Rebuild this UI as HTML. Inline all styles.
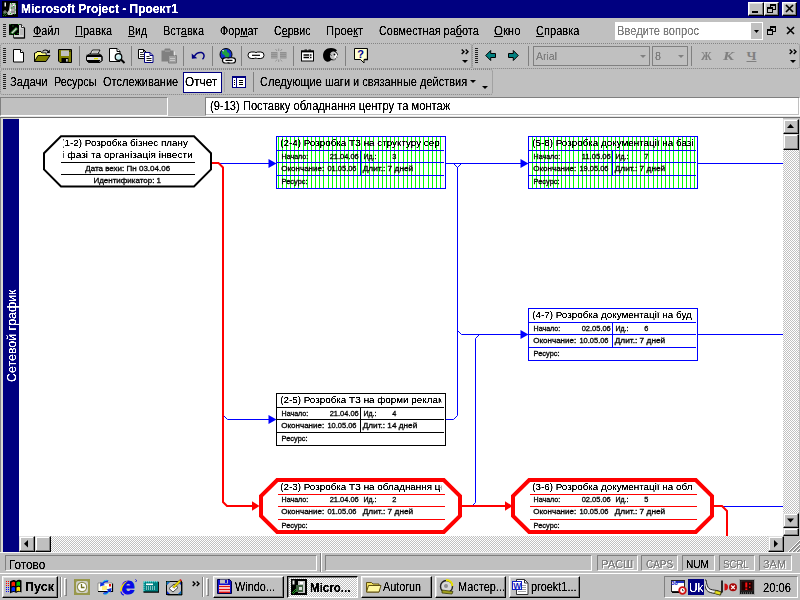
<!DOCTYPE html><html lang="ru"><head><meta charset="utf-8"><title>Microsoft Project - Проект1</title><style>
html,body{margin:0;padding:0;}
body{width:800px;height:600px;overflow:hidden;background:#c0c0c0;position:relative;font-family:"Liberation Sans",sans-serif;font-size:12px;color:#000;}
.a{position:absolute;}
.t{position:absolute;white-space:nowrap;line-height:1;transform-origin:0 0;filter:url(#crisp);}
u{text-decoration:underline;text-underline-offset:1px;}
.btn{position:absolute;background:#c0c0c0;box-sizing:border-box;border:1px solid;border-color:#fff #000 #000 #fff;box-shadow:inset -1px -1px 0 #808080,inset 1px 1px 0 #dfdfdf;}
.sbtn{position:absolute;background:#c0c0c0;box-sizing:border-box;border:1px solid;border-color:#dfdfdf #000 #000 #dfdfdf;box-shadow:inset -1px -1px 0 #808080,inset 1px 1px 0 #fff;}
.sunk{position:absolute;box-sizing:border-box;border:1px solid;border-color:#808080 #fff #fff #808080;}
.track{position:absolute;background:repeating-conic-gradient(#fff 0 25%,#c0c0c0 0 50%) 0 0/2px 2px;}
</style></head><body>
<svg width="0" height="0" style="position:absolute"><defs><filter id="crisp" x="-0.05" y="-0.3" width="1.1" height="1.6" color-interpolation-filters="sRGB"><feComponentTransfer><feFuncA type="linear" slope="2.6" intercept="-0.5"/></feComponentTransfer></filter><filter id="gs" x="-0.05" y="-0.2" width="1.1" height="1.4"><feOffset dx="0" dy="0"/></filter></defs></svg>
<div class="a" style="left:0;top:0;width:800px;height:18px;background:#000080"></div>
<div class="t" id="title" style="left:20.50px;top:2.74px;font-size:12px;font-weight:bold;color:#fff;transform:scaleX(0.9987);">Microsoft Project - Проект1</div>
<svg class="a" style="left:2px;top:1px" width="16" height="16" viewBox="0 0 16 16"><rect width="16" height="16" fill="#000"/><path d="M8 2h5l1 1v10h-3l-1 1h-4l-1-2l2-3z" fill="#c8c8c8"/><path d="M9 4h3v2h-3zM8 8h4v2h-4z" fill="#fff"/><path d="M10 3v9M12 5v7" stroke="#404040" stroke-width=".8"/><rect x="2.500" y="1.500" width="1.500" height="4" fill="#f0f0f0"/><path d="M1 13l3-3M1 15l4-4M3 15l2-2" stroke="#20b020" stroke-dasharray="1 1"/><circle cx="3" cy="11" r="1.200" fill="none" stroke="#d0d0d0" stroke-width=".7"/><path d="M9 2.500h1M13 3.500h1M9 7h1M13 9h1M8 12.500h1M12 13h1M11 5.500h1" stroke="#20c020"/></svg>
<div class="btn" style="left:748px;top:2px;width:16px;height:14px"></div>
<div class="a" style="left:752px;top:11px;width:6px;height:2px;background:#000"></div>
<div class="btn" style="left:764px;top:2px;width:15px;height:14px"></div>
<svg class="a" style="left:767px;top:4px" width="9" height="9" viewBox="0 0 9 9" shape-rendering="crispEdges"><rect x="3" y="0" width="6" height="6" fill="#000"/><rect x="4" y="2" width="4" height="3" fill="#c0c0c0"/><rect x="0" y="3" width="6" height="6" fill="#000"/><rect x="1" y="5" width="4" height="3" fill="#c0c0c0"/></svg>
<div class="btn" style="left:782px;top:2px;width:15px;height:14px"></div>
<svg class="a" style="left:785px;top:4px" width="10" height="9" viewBox="0 0 10 9"><path d="M1 1l7 7M8 1l-7 7" stroke="#000" stroke-width="1.7"/></svg>
<div class="a" style="left:3px;top:24px;width:3px;height:13px;background:repeating-linear-gradient(#202020 0 1px,#c0c0c0 1px 2px)"></div>
<div class="t" id="m0" style="left:33.25px;top:25.32px;font-size:12.5px;color:#000;transform:scaleX(0.8704);"><u>Ф</u>айл</div>
<div class="t" id="m1" style="left:75.25px;top:25.32px;font-size:12.5px;color:#000;transform:scaleX(0.8822);"><u>П</u>равка</div>
<div class="t" id="m2" style="left:128.25px;top:25.32px;font-size:12.5px;color:#000;transform:scaleX(0.8402);"><u>В</u>ид</div>
<div class="t" id="m3" style="left:163.25px;top:25.32px;font-size:12.5px;color:#000;transform:scaleX(0.8825);">Вст<u>а</u>вка</div>
<div class="t" id="m4" style="left:220.25px;top:25.32px;font-size:12.5px;color:#000;transform:scaleX(0.8614);">Фор<u>м</u>ат</div>
<div class="t" id="m5" style="left:274.00px;top:25.32px;font-size:12.5px;color:#000;transform:scaleX(0.8527);">С<u>е</u>рвис</div>
<div class="t" id="m6" style="left:326.25px;top:25.32px;font-size:12.5px;color:#000;transform:scaleX(0.9047);">Прое<u>к</u>т</div>
<div class="t" id="m7" style="left:379.00px;top:25.32px;font-size:12.5px;color:#000;transform:scaleX(0.8721);">Совместная ра<u>б</u>ота</div>
<div class="t" id="m8" style="left:494.00px;top:25.32px;font-size:12.5px;color:#000;transform:scaleX(0.9123);"><u>О</u>кно</div>
<div class="t" id="m9" style="left:536.25px;top:25.32px;font-size:12.5px;color:#000;transform:scaleX(0.8871);"><u>С</u>правка</div>
<svg class="a" style="left:9px;top:22px" width="17" height="17" viewBox="0 0 17 17"><path d="M4.500 2.500h8l3 3v10.500h-11z" fill="#d4d4d4" stroke="#303030"/><path d="M12.500 2.500v3h3" fill="#fff" stroke="#303030"/><path d="M11 8h3M11 10h3M11 12h3" stroke="#a0a0a0"/><path d="M15.500 6v10h-10.500" fill="none" stroke="#000" stroke-width="1.200"/><rect x="0" y="2" width="10" height="11" fill="#000"/><path d="M2 10.500l5-5l1.500 1.500l-5 5z" fill="#d0d0d0" stroke="#20a020" stroke-width=".8"/><path d="M0.500 2.500h1M0.500 12h1M9 2.500h1M3.500 4h1M8.500 11.500h1M5 12.500h1" stroke="#20c020"/></svg>
<div class="a" style="left:615px;top:22px;width:148px;height:18px;background:#fff"></div>
<div class="a" style="left:751px;top:23px;width:11px;height:16px;background:#c0c0c0"></div>
<div class="t" id="q" style="left:616.50px;top:25.32px;font-size:12.5px;color:#808080;transform:scaleX(0.8896);">Введите вопрос</div>
<svg class="a" style="left:754px;top:30px" width="5" height="3"><path d="M0 0h5l-2.500 3z" fill="#000"/></svg>
<svg class="a" style="left:767px;top:26px" width="9" height="9" viewBox="0 0 9 9" shape-rendering="crispEdges"><rect x="3" y="0" width="6" height="6" fill="#000"/><rect x="4" y="2" width="4" height="3" fill="#c0c0c0"/><rect x="0" y="3" width="6" height="6" fill="#000"/><rect x="1" y="5" width="4" height="3" fill="#c0c0c0"/></svg>
<svg class="a" style="left:786px;top:26px" width="9" height="9" viewBox="0 0 9 9"><path d="M1 1l7 7M8 1l-7 7" stroke="#000" stroke-width="1.6"/></svg>
<div class="a" style="left:0px;top:43px;width:472px;height:26px;box-sizing:border-box;border:1px dotted #848484;border-radius:3px"></div>
<div class="a" style="left:472px;top:43px;width:328px;height:26px;box-sizing:border-box;border:1px dotted #848484;border-radius:3px"></div>
<div class="a" style="left:3px;top:48px;width:3px;height:15px;background:repeating-linear-gradient(#202020 0 1px,#c0c0c0 1px 2px)"></div>
<div class="a" style="left:475px;top:48px;width:3px;height:15px;background:repeating-linear-gradient(#202020 0 1px,#c0c0c0 1px 2px)"></div>
<div class="a" style="left:79px;top:46px;width:1px;height:20px;background:#808080"></div>
<div class="a" style="left:131px;top:46px;width:1px;height:20px;background:#808080"></div>
<div class="a" style="left:183px;top:46px;width:1px;height:20px;background:#808080"></div>
<div class="a" style="left:212px;top:46px;width:1px;height:20px;background:#808080"></div>
<div class="a" style="left:241px;top:46px;width:1px;height:20px;background:#808080"></div>
<div class="a" style="left:293px;top:46px;width:1px;height:20px;background:#808080"></div>
<div class="a" style="left:345px;top:46px;width:1px;height:20px;background:#808080"></div>
<div class="a" style="left:528px;top:46px;width:1px;height:20px;background:#808080"></div>
<div class="a" style="left:691px;top:46px;width:1px;height:20px;background:#808080"></div>
<svg class="a" style="left:12px;top:49px" width="13" height="14" viewBox="0 0 13 14"><path d="M1.500 0.500h7l3 3v9.500h-10z" fill="#fff" stroke="#000"/><path d="M8.500 0.500v3h3" fill="#fff" stroke="#000"/></svg>
<svg class="a" style="left:34px;top:48px" width="17" height="15" viewBox="0 0 17 15"><path d="M0.500 13.500v-8.500h1.500l1-1.500h4l1 1.500h4v2" fill="#ffff80" stroke="#000"/><rect x="1" y="5.500" width="10.500" height="2" fill="#ffff80"/><path d="M0.500 13.500l3.500-6h12l-4 6z" fill="#808000" stroke="#000"/><path d="M8.500 3.500c1.500-2 4.500-2 6 0.500" fill="none" stroke="#000" stroke-width="1.100"/><path d="M15.800 1.500v3.500h-3.300z" fill="#000"/></svg>
<svg class="a" style="left:58px;top:49px" width="14" height="14" viewBox="0 0 14 14"><path d="M0.500 0.500h13v13h-11.500l-1.500-1.500z" fill="#808000" stroke="#000"/><rect x="3" y="1.500" width="8" height="5.500" fill="#c0c0c0"/><rect x="3.500" y="9" width="7" height="4" fill="#000"/><rect x="8" y="10" width="1.800" height="2.600" fill="#c0c0c0"/><rect x="11.300" y="1.300" width="1.200" height="1.500" fill="#000"/></svg>
<svg class="a" style="left:85px;top:49px" width="18" height="14" viewBox="0 0 18 14"><path d="M5 5.500l2.500-4.500h7.500l-2.500 4.500z" fill="#fff" stroke="#000" stroke-width=".9"/><path d="M8 2.800h5M7.300 4h5" stroke="#808080" stroke-width=".7"/><path d="M1.500 7.500l3-2.500h10l2.500 2.500v4l-2 2h-11.500l-2-2z" fill="#c8c8c8" stroke="#000"/><path d="M1.500 7.500h15.500" stroke="#000"/><path d="M2 11.500h13" stroke="#000"/><rect x="2" y="8" width="14" height="3" fill="#d8d8d8"/><path d="M1.500 6.500h15" stroke="#000" stroke-width="1.600"/><path d="M3 12.500h11.500" stroke="#000" stroke-width="1.600"/><rect x="9" y="9" width="4" height="1.300" fill="#e0e000"/><path d="M14.500 5.500l2.500 2v4l-2 2" fill="none" stroke="#000"/></svg>
<svg class="a" style="left:108px;top:48px" width="18" height="16" viewBox="0 0 18 16"><path d="M1.500 0.500h7.500l3 3v10h-10.500z" fill="#fff" stroke="#000"/><path d="M9 0.500v3h3" fill="#fff" stroke="#000"/><circle cx="10.500" cy="9" r="3.300" fill="#c8eef0" stroke="#000" stroke-width="1.200"/><path d="M9 8.500a1.800 1.800 0 0 1 2-1.300" fill="none" stroke="#fff" stroke-width=".9"/><path d="M13 11.500l3.500 3.500" stroke="#000" stroke-width="2"/></svg>
<svg class="a" style="left:138px;top:49px" width="16" height="14" viewBox="0 0 16 14"><path d="M0.500 0.500h5l2.500 2.500v6.500h-7.500z" fill="#fff" stroke="#000"/><path d="M5.500 0.500v2.500h2.500" fill="none" stroke="#000"/><path d="M2 3.500h3M2 5.500h4.500M2 7.500h4.500" stroke="#000" stroke-width=".8"/><path d="M6.500 3.500h5.500l3 3v7h-8.500z" fill="#fff" stroke="#000080"/><path d="M12 3.500v3h3" fill="none" stroke="#000080"/><path d="M8.500 7.500h3M8.500 9.500h5M8.500 11.500h5" stroke="#000" stroke-width=".9"/></svg>
<svg class="a" style="left:160px;top:48px" width="18" height="16" viewBox="0 0 18 16"><path d="M1.500 2.500h12v11h-12z" fill="#808080"/><rect x="4.500" y="0.500" width="6" height="3" rx="1" fill="#808080"/><rect x="5" y="2.600" width="5" height="1" fill="#a8a8a8"/><path d="M8.500 7.500h8v7.500h-8z" fill="#a0a0a0" stroke="#808080"/><path d="M10 10.500h5M10 12.500h5" stroke="#c8c8c8"/><path d="M14.500 3.500v4" stroke="#fff" stroke-width=".6"/></svg>
<svg class="a" style="left:191px;top:51px" width="15" height="10" viewBox="0 0 15 10"><path d="M3.500 5.200C5 2.600 8 1.200 10.500 1.600C12.500 2 13.300 4 13 5.500C12.800 6.800 12.300 7.600 11.500 8.300" fill="none" stroke="#000080" stroke-width="1.500"/><path d="M0.700 2.600L0.900 7.700L6.200 7.300Z" fill="#000080"/></svg>
<svg class="a" style="left:218px;top:47px" width="18" height="17" viewBox="0 0 18 17"><circle cx="8" cy="7.500" r="6" fill="#1030d0" stroke="#000" stroke-width="1"/><path d="M4 4.500c1.500-2 3-2 4.500-1.500c1 1 0 2 1.500 2.500c2 0.500 2 3 0.500 4.500c-1.500 1-3 0.500-3.500-1c-0.500-1.500-1.500-1-2.500-2c-0.700-0.800-0.800-1.600-0.500-2.500z" fill="#20a040"/><path d="M3.500 3.500l2-0.500l0.500 1.500z" fill="#fff"/><rect x="4.500" y="10.800" width="8" height="5.200" rx="2.600" fill="#fff" stroke="#000" stroke-width="1.200"/><rect x="9.500" y="10.800" width="8" height="5.200" rx="2.600" fill="#fff" stroke="#000" stroke-width="1.200"/><rect x="7.500" y="11.600" width="7" height="3.600" fill="#fff"/><path d="M7.500 13.400h7" stroke="#000" stroke-width="1.300"/></svg>
<svg class="a" style="left:247px;top:51px" width="18" height="9" viewBox="0 0 18 9"><rect x="1" y="1" width="9.500" height="6.500" rx="3.200" fill="#fff" stroke="#000" stroke-width="1"/><rect x="7.500" y="1" width="9.500" height="6.500" rx="3.200" fill="#fff" stroke="#000" stroke-width="1"/><rect x="5" y="2" width="8" height="4.500" fill="#fff"/><path d="M5 4.300h8" stroke="#000" stroke-width="1.200"/></svg>
<svg class="a" style="left:270px;top:48px" width="18" height="15" viewBox="0 0 18 15"><rect x="1" y="4" width="6.500" height="6.500" fill="#909090"/><rect x="10" y="4" width="6.500" height="6.500" fill="#909090"/><path d="M1.500 5.500h5.500M1.500 7.500h5.500M1.500 9.500h5.500M10.500 5.500h5.500M10.500 7.500h5.500M10.500 9.500h5.500" stroke="#b0b0b0" stroke-dasharray="1 1"/><path d="M8.700 0.500v2.500M8.700 11.500v2.500M5.500 1l1.500 2M12 1l-1.500 2M5.500 13.500l1.500-2M12 13.500l-1.500-2" stroke="#909090" stroke-width=".9"/></svg>
<svg class="a" style="left:300px;top:49px" width="15" height="13" viewBox="0 0 15 13"><rect x="1.500" y="2" width="12" height="10" fill="#fff" stroke="#000" stroke-width="1"/><path d="M1 2.500h13" stroke="#000" stroke-width="1.800"/><path d="M4.500 1h2.500M8.500 1h2.500" stroke="#000" stroke-width="1"/><path d="M3.500 6h8M3.500 8.500h8" stroke="#000" stroke-width="1.300"/><path d="M9 6h1M9 8.500h1" stroke="#fff" stroke-width="1.300"/></svg>
<svg class="a" style="left:322px;top:47px" width="18" height="17" viewBox="0 0 18 17"><path d="M1 9c0-5 3-8 8-8c3 0 5 1 6 2.500l-1.500 1c1.500 1 2.500 2.500 2.500 4l-1.500 0.500l1 1.500l-2 0.500v1.500c-1 1-3 1-4.500 0.500c-1 1.500-2.500 2-4.500 1.500c-2.500-1-3.500-3.500-3.500-6.500z" fill="#000"/><path d="M9 5.500c1.500-1.500 4-1 5 0.500c1 1 1.500 2 1.500 3l-1.500 0.500l0.800 1.300l-1.800 0.500v1.200c-1.500 0.500-3 0-4-1c-1.500-1.500-1.500-4.500 0-6z" fill="#c0c0c0"/><path d="M12 5.500l2.500 1l1 2.500l-1.500 0.500l0.500 1.200l-2 0.300z" fill="#fff"/><circle cx="12.500" cy="7.500" r=".9" fill="#000"/><path d="M7.500 8.500c0.500-1 1.500-1 2 0" stroke="#000" fill="none" stroke-width=".8"/></svg>
<svg class="a" style="left:354px;top:48px" width="14" height="16" viewBox="0 0 14 16"><path d="M0.500 0.500h13v11h-3.500l0 3.500l-3.500-3.500h-6z" fill="#ffffd0" stroke="#000"/><path d="M13.500 1v10.500h-3" fill="none" stroke="#000" stroke-width="1.300"/><text x="3.300" y="10" font-family="'Liberation Sans',sans-serif" font-weight="bold" font-size="11" fill="#000090">?</text></svg>
<svg class="a" style="left:485px;top:50px" width="11" height="11" viewBox="0 0 11 11"><path d="M0.700 5.500l5-5v3h4.800v4h-4.800v3z" fill="#008080" stroke="#000" stroke-width="1"/></svg>
<svg class="a" style="left:508px;top:50px" width="11" height="11" viewBox="0 0 11 11"><path d="M10.300 5.500l-5-5v3h-4.800v4h4.800v3z" fill="#008080" stroke="#000" stroke-width="1"/></svg>
<svg class="a" style="left:461px;top:49px" width="8" height="15" viewBox="0 0 8 15"><path d="M0.7 0.5l2.3 2.3l-2.3 2.3M4.7 0.5l2.3 2.3l-2.3 2.3" fill="none" stroke="#000" stroke-width="1.4"/><path d="M1 11h6l-3 3z" fill="#000"/></svg>
<svg class="a" style="left:789px;top:49px" width="8" height="15" viewBox="0 0 8 15"><path d="M0.7 0.5l2.3 2.3l-2.3 2.3M4.7 0.5l2.3 2.3l-2.3 2.3" fill="none" stroke="#000" stroke-width="1.4"/><path d="M1 11h6l-3 3z" fill="#000"/></svg>
<div class="a" style="left:533px;top:46px;width:117px;height:20px;box-sizing:border-box;border:1px solid #808080"></div>
<div class="t" style="left:535.50px;top:50.59px;font-size:11px;color:#808080;transform:scaleX(0.9542);">Arial</div>
<svg class="a" style="left:640px;top:55px" width="7" height="4"><path d="M0 0h6l-3 3z" fill="#808080"/></svg>
<div class="a" style="left:652px;top:46px;width:36px;height:20px;box-sizing:border-box;border:1px solid #808080"></div>
<div class="t" style="left:655.00px;top:50.59px;font-size:11px;color:#808080;transform:scaleX(0.9807);">8</div>
<svg class="a" style="left:678px;top:55px" width="7" height="4"><path d="M0 0h6l-3 3z" fill="#808080"/></svg>
<div class="t" style="left:700.5px;top:49px;font-size:13.5px;font-weight:bold;color:#808080;font-family:'Liberation Serif',serif;transform:scaleX(0.8);filter:none">Ж</div>
<div class="t" style="left:722.5px;top:49px;font-size:13.5px;font-weight:bold;font-style:italic;color:#808080;font-family:'Liberation Serif',serif;transform:scaleX(1.2);filter:none">К</div>
<div class="t" style="left:746.5px;top:49px;font-size:13.5px;font-weight:bold;color:#808080;font-family:'Liberation Serif',serif;text-decoration:underline;text-underline-offset:1px;filter:none">Ч</div>
<div class="a" style="left:0px;top:69px;width:493px;height:26px;box-sizing:border-box;border:1px dotted #848484;border-radius:3px"></div>
<div class="a" style="left:3px;top:74px;width:3px;height:15px;background:repeating-linear-gradient(#202020 0 1px,#c0c0c0 1px 2px)"></div>
<div class="t" id="g0" style="left:10.00px;top:76.32px;font-size:12.5px;color:#000;transform:scaleX(0.8935);">Задачи</div>
<div class="t" id="g1" style="left:54.00px;top:76.32px;font-size:12.5px;color:#000;transform:scaleX(0.8623);">Ресурсы</div>
<div class="t" id="g2" style="left:103.25px;top:76.32px;font-size:12.5px;color:#000;transform:scaleX(0.8822);">Отслеживание</div>
<div class="a" style="left:183px;top:72px;width:39px;height:21px;box-sizing:border-box;border:1px solid #000080;background:#fff"></div>
<div class="t" id="g3" style="left:185.25px;top:76.32px;font-size:12.5px;color:#000;transform:scaleX(0.9423);">Отчет</div>
<div class="a" style="left:224px;top:72px;width:1px;height:20px;background:#a8a8a8"></div>
<svg class="a" style="left:232px;top:76px" width="14" height="12" viewBox="0 0 14 12"><rect x="0" y="0" width="14" height="12" fill="#000080"/><rect x="1" y="2" width="3" height="9" fill="#fff"/><rect x="5" y="2" width="8" height="9" fill="#fff"/><path d="M2 4.500h1M2 6.500h1M2 8.500h1M7 4.500h4M7 6.500h4M7 8.500h4" stroke="#000" stroke-width="1"/></svg>
<div class="a" style="left:253px;top:72px;width:1px;height:20px;background:#808080"></div>
<div class="t" id="g4" style="left:259.50px;top:76.32px;font-size:12.5px;color:#000;transform:scaleX(0.8816);">Следующие шаги и связанные действия</div>
<svg class="a" style="left:470px;top:80px" width="6" height="3"><path d="M0 0h6l-3 3z" fill="#000"/></svg>
<svg class="a" style="left:482px;top:86px" width="6" height="3"><path d="M0 0h6l-3 3z" fill="#000"/></svg>
<div class="a" style="left:0;top:97px;width:168px;height:19px;box-sizing:border-box;border-top:1px solid #808080;border-left:1px solid #808080;border-bottom:1px solid #fff;border-right:1px solid #fff"></div>
<div class="a" style="left:205px;top:97px;width:595px;height:19px;box-sizing:border-box;background:#fff;border:1px solid;border-color:#808080 #fff #fff #808080;box-shadow:inset -1px -1px 0 #c0c0c0"></div>
<div class="t" id="entry" style="left:209.50px;top:100.32px;font-size:12.5px;color:#000;transform:scaleX(0.8931);">(9-13) Поставку обладнання центру та монтаж</div>
<div class="a" style="left:0;top:116px;width:800px;height:1px;background:#e4e4e4"></div>
<div class="a" style="left:0;top:117px;width:800px;height:1px;background:#707070"></div>
<div class="a" style="left:0px;top:118px;width:1px;height:434px;background:#888888"></div>
<div class="a" style="left:2px;top:118px;width:781px;height:418px;background:#fff"></div>
<div class="a" style="left:2px;top:536px;width:17px;height:16px;background:#fff"></div>
<div class="a" style="left:1px;top:118px;width:18px;height:434px;background:#dadad2"></div>
<div class="a" style="left:3px;top:119px;width:16px;height:433px;background:#000080"></div>
<div class="t" id="vt" style="left:6.3px;top:382.3px;font-size:12.5px;color:#fff;transform:rotate(-90deg) scaleX(0.9924)">Сетевой график</div>
<svg class="a" style="left:19px;top:118px" width="764" height="418" viewBox="19 118 764 418" font-family="'Liberation Sans',sans-serif">
<polyline points="212,163.5 270,163.5" fill="none" stroke="#0000ff" stroke-width="1"/>
<polygon points="268.5,158.9 268.5,168.1 276.5,163.5" fill="#0000ff"/>
<polyline points="224,416 227.5,419.5 270,419.5" fill="none" stroke="#0000ff" stroke-width="1"/>
<polygon points="268.5,414.9 268.5,424.1 276.5,419.5" fill="#0000ff"/>
<polyline points="445,163.5 522,163.5" fill="none" stroke="#0000ff" stroke-width="1"/>
<polygon points="520.5,158.9 520.5,168.1 528.5,163.5" fill="#0000ff"/>
<polyline points="453.5,163.5 457.5,167.5 461.5,163.5" fill="none" stroke="#0000ff" stroke-width="1"/>
<polyline points="457.5,167 457.5,415.5 453.5,419.5 445,419.5" fill="none" stroke="#0000ff" stroke-width="1"/>
<polyline points="457.5,330.5 461.5,334.5 522,334.5" fill="none" stroke="#0000ff" stroke-width="1"/>
<polygon points="520.5,329.9 520.5,339.1 528.5,334.5" fill="#0000ff"/>
<polyline points="479.5,334.5 475.5,338.5 475.5,502.5 471.5,506.5 462,506.5" fill="none" stroke="#0000ff" stroke-width="1"/>
<polyline points="697,163.5 783,163.5" fill="none" stroke="#0000ff" stroke-width="1"/>
<polyline points="697,334.5 783,334.5" fill="none" stroke="#0000ff" stroke-width="1"/>
<polyline points="722,506.5 783,506.5" fill="none" stroke="#0000ff" stroke-width="1"/>
<polyline points="212,163 218.5,163 223,167.5 223,502 227,506 253,506" fill="none" stroke="#ff0000" stroke-width="2"/>
<polygon points="252.0,501.2 252.0,510.8 259.5,506" fill="#ff0000"/>
<polyline points="461,506 506,506" fill="none" stroke="#ff0000" stroke-width="2"/>
<polygon points="505.0,501.2 505.0,510.8 512.5,506" fill="#ff0000"/>
<polyline points="713,506 722,506 727,511 727,540" fill="none" stroke="#ff0000" stroke-width="2"/>
<polygon points="61,136.2 194,136.2 211,153.2 211,169.4 194,186.4 61,186.4 44,169.4 44,153.2" fill="#fff" stroke="#000" stroke-width="2"/>
<line x1="61" y1="162.5" x2="195" y2="162.5" stroke="#000"/><line x1="61" y1="174.5" x2="195" y2="174.5" stroke="#000"/>
<svg x="63.3" y="137" width="130" height="25" viewBox="63.3 137 130 25">
<text id="tA1" transform="translate(61.3,146.3) scale(1.094056947952421,1)" font-size="9.0" fill="#000" filter="url(#crisp)">(1-2) Розробка бізнес плану</text>
<text id="tA2" transform="translate(62.3,157.6) scale(1.126722620255091,1)" font-size="9.0" fill="#000" filter="url(#crisp)">і фазі та організація інвести</text>
</svg>
<text transform="translate(85.20,170.5) scale(1.115,1)" font-size="7.2" fill="#000" stroke="#000" stroke-width="0.3" filter="url(#gs)">Дата вехи: Пн 03.04.06</text>
<text transform="translate(93.40,182.8) scale(1.110,1)" font-size="7.2" fill="#000" stroke="#000" stroke-width="0.3" filter="url(#gs)">Идентификатор: 1</text>
<rect x="276.5" y="136.5" width="169" height="52" fill="#fff" stroke="#0000ff" stroke-width="1"/>
<path d="M278.5 137v51M282.5 137v51M286.5 137v51M290.5 137v51M294.5 137v51M298.5 137v51M303.5 137v51M307.5 137v51M311.5 137v51M315.5 137v51M319.5 137v51M323.5 137v51M328.5 137v51M332.5 137v51M336.5 137v51M340.5 137v51M344.5 137v51M348.5 137v51M353.5 137v51M357.5 137v51M361.5 137v51M365.5 137v51M369.5 137v51M373.5 137v51M378.5 137v51M382.5 137v51M386.5 137v51M390.5 137v51M394.5 137v51M398.5 137v51M403.5 137v51M407.5 137v51M411.5 137v51M415.5 137v51M419.5 137v51M423.5 137v51M428.5 137v51M432.5 137v51M436.5 137v51M440.5 137v51" stroke="#00ff00" stroke-width="1" shape-rendering="crispEdges"/>
<line x1="277" y1="150.5" x2="444" y2="150.5" stroke="#0000ff" stroke-width="1"/>
<line x1="277" y1="162.5" x2="444" y2="162.5" stroke="#0000ff" stroke-width="1"/>
<line x1="277" y1="175.5" x2="444" y2="175.5" stroke="#0000ff" stroke-width="1"/>
<line x1="360.5" y1="151" x2="360.5" y2="175" stroke="#0000ff" stroke-width="1"/>
<svg x="278" y="137" width="163.3" height="13" viewBox="278 137 163.3 13">
<text id="t24" transform="translate(280.2,145.8) scale(1.096,1)" font-size="9.0" fill="#000" filter="url(#crisp)">(2-4) Розробка ТЗ на структуру сер</text>
</svg>
<text transform="translate(281.60,158.8) scale(0.986,1)" font-size="7.2" fill="#000" stroke="#000" stroke-width="0.3" filter="url(#gs)">Начало:</text>
<text transform="translate(329.70,158.8) scale(1.038,1)" font-size="7.2" fill="#000" stroke="#000" stroke-width="0.3" filter="url(#gs)">21.04.06</text>
<text transform="translate(363.45,158.8) scale(0.979,1)" font-size="7.2" fill="#000" stroke="#000" stroke-width="0.3" filter="url(#gs)">Ид.:</text>
<text transform="translate(392.20,158.8) scale(1.024,1)" font-size="7.2" fill="#000" stroke="#000" stroke-width="0.3" filter="url(#gs)">3</text>
<text transform="translate(281.20,170.8) scale(1.117,1)" font-size="7.2" fill="#000" stroke="#000" stroke-width="0.3" filter="url(#gs)">Окончание:</text>
<text transform="translate(327.45,170.8) scale(1.038,1)" font-size="7.2" fill="#000" stroke="#000" stroke-width="0.3" filter="url(#gs)">01.05.06</text>
<text transform="translate(362.70,170.8) scale(1.155,1)" font-size="7.2" fill="#000" stroke="#000" stroke-width="0.3" filter="url(#gs)">Длит.: 7 дней</text>
<text transform="translate(281.60,183.6) scale(1.029,1)" font-size="7.2" fill="#000" stroke="#000" stroke-width="0.3" filter="url(#gs)">Ресурс:</text>
<rect x="528.5" y="136.5" width="169" height="52" fill="#fff" stroke="#0000ff" stroke-width="1"/>
<path d="M532.5 137v51M536.5 137v51M540.5 137v51M544.5 137v51M548.5 137v51M553.5 137v51M557.5 137v51M561.5 137v51M565.5 137v51M569.5 137v51M573.5 137v51M578.5 137v51M582.5 137v51M586.5 137v51M590.5 137v51M594.5 137v51M598.5 137v51M603.5 137v51M607.5 137v51M611.5 137v51M615.5 137v51M619.5 137v51M623.5 137v51M628.5 137v51M632.5 137v51M636.5 137v51M640.5 137v51M644.5 137v51M648.5 137v51M653.5 137v51M657.5 137v51M661.5 137v51M665.5 137v51M669.5 137v51M673.5 137v51M678.5 137v51M682.5 137v51M686.5 137v51M690.5 137v51M694.5 137v51" stroke="#00ff00" stroke-width="1" shape-rendering="crispEdges"/>
<line x1="529" y1="150.5" x2="696" y2="150.5" stroke="#0000ff" stroke-width="1"/>
<line x1="529" y1="162.5" x2="696" y2="162.5" stroke="#0000ff" stroke-width="1"/>
<line x1="529" y1="175.5" x2="696" y2="175.5" stroke="#0000ff" stroke-width="1"/>
<line x1="612.5" y1="151" x2="612.5" y2="175" stroke="#0000ff" stroke-width="1"/>
<svg x="530" y="137" width="163.3" height="13" viewBox="530 137 163.3 13">
<text id="t58" transform="translate(532.2,145.8) scale(1.096,1)" font-size="9.0" fill="#000" filter="url(#crisp)">(5-8) Розробка документації на базі</text>
</svg>
<text transform="translate(533.60,158.8) scale(0.986,1)" font-size="7.2" fill="#000" stroke="#000" stroke-width="0.3" filter="url(#gs)">Начало:</text>
<text transform="translate(581.70,158.8) scale(1.058,1)" font-size="7.2" fill="#000" stroke="#000" stroke-width="0.3" filter="url(#gs)">11.05.06</text>
<text transform="translate(615.45,158.8) scale(0.979,1)" font-size="7.2" fill="#000" stroke="#000" stroke-width="0.3" filter="url(#gs)">Ид.:</text>
<text transform="translate(644.20,158.8) scale(1.024,1)" font-size="7.2" fill="#000" stroke="#000" stroke-width="0.3" filter="url(#gs)">7</text>
<text transform="translate(533.20,170.8) scale(1.117,1)" font-size="7.2" fill="#000" stroke="#000" stroke-width="0.3" filter="url(#gs)">Окончание:</text>
<text transform="translate(579.45,170.8) scale(1.038,1)" font-size="7.2" fill="#000" stroke="#000" stroke-width="0.3" filter="url(#gs)">19.05.06</text>
<text transform="translate(614.70,170.8) scale(1.155,1)" font-size="7.2" fill="#000" stroke="#000" stroke-width="0.3" filter="url(#gs)">Длит.: 7 дней</text>
<text transform="translate(533.60,183.6) scale(1.029,1)" font-size="7.2" fill="#000" stroke="#000" stroke-width="0.3" filter="url(#gs)">Ресурс:</text>
<rect x="528.5" y="308.5" width="169" height="52" fill="#fff" stroke="#0000ff" stroke-width="1"/>
<line x1="529" y1="322.5" x2="696" y2="322.5" stroke="#0000ff" stroke-width="1"/>
<line x1="529" y1="334.5" x2="696" y2="334.5" stroke="#0000ff" stroke-width="1"/>
<line x1="529" y1="347.5" x2="696" y2="347.5" stroke="#0000ff" stroke-width="1"/>
<line x1="612.5" y1="323" x2="612.5" y2="347" stroke="#0000ff" stroke-width="1"/>
<svg x="530" y="309" width="163.3" height="13" viewBox="530 309 163.3 13">
<text id="t47" transform="translate(532.2,317.8) scale(1.096,1)" font-size="9.0" fill="#000" filter="url(#crisp)">(4-7) Розробка документації на буд</text>
</svg>
<text transform="translate(533.60,330.8) scale(0.986,1)" font-size="7.2" fill="#000" stroke="#000" stroke-width="0.3" filter="url(#gs)">Начало:</text>
<text transform="translate(581.70,330.8) scale(1.038,1)" font-size="7.2" fill="#000" stroke="#000" stroke-width="0.3" filter="url(#gs)">02.05.06</text>
<text transform="translate(615.45,330.8) scale(0.979,1)" font-size="7.2" fill="#000" stroke="#000" stroke-width="0.3" filter="url(#gs)">Ид.:</text>
<text transform="translate(644.20,330.8) scale(1.024,1)" font-size="7.2" fill="#000" stroke="#000" stroke-width="0.3" filter="url(#gs)">6</text>
<text transform="translate(533.20,342.8) scale(1.117,1)" font-size="7.2" fill="#000" stroke="#000" stroke-width="0.3" filter="url(#gs)">Окончание:</text>
<text transform="translate(579.45,342.8) scale(1.038,1)" font-size="7.2" fill="#000" stroke="#000" stroke-width="0.3" filter="url(#gs)">10.05.06</text>
<text transform="translate(614.70,342.8) scale(1.155,1)" font-size="7.2" fill="#000" stroke="#000" stroke-width="0.3" filter="url(#gs)">Длит.: 7 дней</text>
<text transform="translate(533.60,355.6) scale(1.029,1)" font-size="7.2" fill="#000" stroke="#000" stroke-width="0.3" filter="url(#gs)">Ресурс:</text>
<rect x="276.5" y="393.5" width="169" height="52" fill="#fff" stroke="#000" stroke-width="1"/>
<line x1="277" y1="407.5" x2="444" y2="407.5" stroke="#000" stroke-width="1"/>
<line x1="277" y1="419.5" x2="444" y2="419.5" stroke="#000" stroke-width="1"/>
<line x1="277" y1="432.5" x2="444" y2="432.5" stroke="#000" stroke-width="1"/>
<line x1="360.5" y1="408" x2="360.5" y2="432" stroke="#000" stroke-width="1"/>
<svg x="278" y="394" width="163.3" height="13" viewBox="278 394 163.3 13">
<text id="t25" transform="translate(280.2,402.8) scale(1.096,1)" font-size="9.0" fill="#000" filter="url(#crisp)">(2-5) Розробка ТЗ на форми реклам</text>
</svg>
<text transform="translate(281.60,415.8) scale(0.986,1)" font-size="7.2" fill="#000" stroke="#000" stroke-width="0.3" filter="url(#gs)">Начало:</text>
<text transform="translate(329.70,415.8) scale(1.038,1)" font-size="7.2" fill="#000" stroke="#000" stroke-width="0.3" filter="url(#gs)">21.04.06</text>
<text transform="translate(363.45,415.8) scale(0.979,1)" font-size="7.2" fill="#000" stroke="#000" stroke-width="0.3" filter="url(#gs)">Ид.:</text>
<text transform="translate(392.20,415.8) scale(1.024,1)" font-size="7.2" fill="#000" stroke="#000" stroke-width="0.3" filter="url(#gs)">4</text>
<text transform="translate(281.20,427.8) scale(1.117,1)" font-size="7.2" fill="#000" stroke="#000" stroke-width="0.3" filter="url(#gs)">Окончание:</text>
<text transform="translate(327.45,427.8) scale(1.038,1)" font-size="7.2" fill="#000" stroke="#000" stroke-width="0.3" filter="url(#gs)">10.05.06</text>
<text transform="translate(362.70,427.8) scale(1.142,1)" font-size="7.2" fill="#000" stroke="#000" stroke-width="0.3" filter="url(#gs)">Длит.: 14 дней</text>
<text transform="translate(281.60,440.6) scale(1.029,1)" font-size="7.2" fill="#000" stroke="#000" stroke-width="0.3" filter="url(#gs)">Ресурс:</text>
<polygon points="277.2,480 443.8,480 460,496.2 460,515.8 443.8,532 277.2,532 261,515.8 261,496.2" fill="#fff" stroke="#ff0000" stroke-width="4"/>
<line x1="278" y1="494.5" x2="445" y2="494.5" stroke="#ff0000" stroke-width="1"/>
<line x1="278" y1="506.5" x2="445" y2="506.5" stroke="#ff0000" stroke-width="1"/>
<line x1="278" y1="519.5" x2="445" y2="519.5" stroke="#ff0000" stroke-width="1"/>
<svg x="278" y="482" width="163.3" height="12" viewBox="278 482 163.3 12">
<text id="t23" transform="translate(280.2,490) scale(1.096,1)" font-size="9.0" fill="#000" filter="url(#crisp)">(2-3) Розробка ТЗ на обладнання це</text>
</svg>
<text transform="translate(281.60,502) scale(0.986,1)" font-size="7.2" fill="#000" stroke="#000" stroke-width="0.3" filter="url(#gs)">Начало:</text>
<text transform="translate(329.70,502) scale(1.038,1)" font-size="7.2" fill="#000" stroke="#000" stroke-width="0.3" filter="url(#gs)">21.04.06</text>
<text transform="translate(363.45,502) scale(0.979,1)" font-size="7.2" fill="#000" stroke="#000" stroke-width="0.3" filter="url(#gs)">Ид.:</text>
<text transform="translate(392.20,502) scale(1.024,1)" font-size="7.2" fill="#000" stroke="#000" stroke-width="0.3" filter="url(#gs)">2</text>
<text transform="translate(281.20,514.4) scale(1.117,1)" font-size="7.2" fill="#000" stroke="#000" stroke-width="0.3" filter="url(#gs)">Окончание:</text>
<text transform="translate(327.45,514.4) scale(1.038,1)" font-size="7.2" fill="#000" stroke="#000" stroke-width="0.3" filter="url(#gs)">01.05.06</text>
<text transform="translate(362.70,514.4) scale(1.155,1)" font-size="7.2" fill="#000" stroke="#000" stroke-width="0.3" filter="url(#gs)">Длит.: 7 дней</text>
<text transform="translate(281.60,527.8) scale(1.029,1)" font-size="7.2" fill="#000" stroke="#000" stroke-width="0.3" filter="url(#gs)">Ресурс:</text>
<polygon points="529.2,480 695.8,480 712,496.2 712,515.8 695.8,532 529.2,532 513,515.8 513,496.2" fill="#fff" stroke="#ff0000" stroke-width="4"/>
<line x1="530" y1="494.5" x2="697" y2="494.5" stroke="#ff0000" stroke-width="1"/>
<line x1="530" y1="506.5" x2="697" y2="506.5" stroke="#ff0000" stroke-width="1"/>
<line x1="530" y1="519.5" x2="697" y2="519.5" stroke="#ff0000" stroke-width="1"/>
<svg x="530" y="482" width="163.3" height="12" viewBox="530 482 163.3 12">
<text id="t36" transform="translate(532.2,490) scale(1.096,1)" font-size="9.0" fill="#000" filter="url(#crisp)">(3-6) Розробка документації на обл</text>
</svg>
<text transform="translate(533.60,502) scale(0.986,1)" font-size="7.2" fill="#000" stroke="#000" stroke-width="0.3" filter="url(#gs)">Начало:</text>
<text transform="translate(581.70,502) scale(1.038,1)" font-size="7.2" fill="#000" stroke="#000" stroke-width="0.3" filter="url(#gs)">02.05.06</text>
<text transform="translate(615.45,502) scale(0.979,1)" font-size="7.2" fill="#000" stroke="#000" stroke-width="0.3" filter="url(#gs)">Ид.:</text>
<text transform="translate(644.20,502) scale(1.024,1)" font-size="7.2" fill="#000" stroke="#000" stroke-width="0.3" filter="url(#gs)">5</text>
<text transform="translate(533.20,514.4) scale(1.117,1)" font-size="7.2" fill="#000" stroke="#000" stroke-width="0.3" filter="url(#gs)">Окончание:</text>
<text transform="translate(579.45,514.4) scale(1.038,1)" font-size="7.2" fill="#000" stroke="#000" stroke-width="0.3" filter="url(#gs)">10.05.06</text>
<text transform="translate(614.70,514.4) scale(1.155,1)" font-size="7.2" fill="#000" stroke="#000" stroke-width="0.3" filter="url(#gs)">Длит.: 7 дней</text>
<text transform="translate(533.60,527.8) scale(1.029,1)" font-size="7.2" fill="#000" stroke="#000" stroke-width="0.3" filter="url(#gs)">Ресурс:</text>
</svg>
<div class="track" style="left:783px;top:119px;width:16px;height:417px"></div>
<div class="a" style="left:799px;top:118px;width:1px;height:435px;background:#c0c0c0"></div>
<div class="sbtn" style="left:783px;top:119px;width:16px;height:15px"></div>
<svg class="a" style="left:0;top:0" width="800" height="600"><polygon points="787.0,128.0 794.0,128.0 790.5,124.0" fill="#000"/></svg>
<div class="sbtn" style="left:783px;top:134px;width:16px;height:16px"></div>
<div class="sbtn" style="left:783px;top:513px;width:16px;height:15px"></div>
<svg class="a" style="left:0;top:0" width="800" height="600"><polygon points="787.0,518.5 794.0,518.5 790.5,522.5" fill="#000"/></svg>
<div class="sbtn" style="left:783px;top:528px;width:16px;height:8px"></div>
<div class="track" style="left:19px;top:536px;width:764px;height:16px"></div>
<div class="sbtn" style="left:19px;top:536px;width:16px;height:16px"></div>
<svg class="a" style="left:0;top:0" width="800" height="600"><polygon points="28.0,540.0 28.0,547.5 24.0,543.75" fill="#000"/></svg>
<div class="sbtn" style="left:35px;top:536px;width:16px;height:16px"></div>
<div class="sbtn" style="left:768px;top:536px;width:16px;height:16px"></div>
<svg class="a" style="left:0;top:0" width="800" height="600"><polygon points="774.0,540.0 774.0,547.5 778.0,543.75" fill="#000"/></svg>
<div class="a" style="left:784px;top:536px;width:16px;height:17px;background:#c0c0c0"></div>
<svg class="a" style="left:787px;top:539px" width="13" height="13" viewBox="0 0 13 13"><path d="M13 2L2 13M13 6L6 13M13 10L10 13" stroke="#808080" stroke-width="1.500"/><path d="M13 1L1 13M13 5L5 13M13 9L9 13" stroke="#fff" stroke-width="1"/></svg>
<div class="a" style="left:0;top:552px;width:800px;height:22px;background:#c0c0c0"></div>
<div class="a" style="left:0;top:552px;width:800px;height:1px;background:#f4f4f4"></div>
<div class="sunk" style="left:5px;top:555px;width:312px;height:16px"></div>
<div class="t" id="ready" style="left:9.25px;top:558.74px;font-size:12px;color:#000;transform:scaleX(0.9783);">Готово</div>
<div class="sunk" style="left:325px;top:555px;width:267px;height:16px"></div>
<div class="a" style="left:320px;top:553px;width:1px;height:19px;background:#808080"></div><div class="a" style="left:321px;top:553px;width:1px;height:19px;background:#fff"></div>
<div class="sunk" style="left:597px;top:555px;width:41px;height:16px"></div>
<div class="t" style="left:602.00px;top:560.17px;font-size:11.5px;color:#fff;transform:scaleX(0.9739);">РАСШ</div>
<div class="t" style="left:601.00px;top:559.17px;font-size:11.5px;color:#808080;transform:scaleX(0.9739);">РАСШ</div>
<div class="sunk" style="left:641px;top:555px;width:37px;height:16px"></div>
<div class="t" style="left:646.50px;top:560.17px;font-size:11.5px;color:#fff;transform:scaleX(0.8621);">CAPS</div>
<div class="t" style="left:645.50px;top:559.17px;font-size:11.5px;color:#808080;transform:scaleX(0.8621);">CAPS</div>
<div class="sunk" style="left:682px;top:555px;width:33px;height:16px"></div>
<div class="t" style="left:686.20px;top:559.17px;font-size:11.5px;color:#000;transform:scaleX(0.8782);">NUM</div>
<div class="sunk" style="left:719px;top:555px;width:36px;height:16px"></div>
<div class="t" style="left:724.10px;top:560.17px;font-size:11.5px;color:#fff;transform:scaleX(0.8378);">SCRL</div>
<div class="t" style="left:723.10px;top:559.17px;font-size:11.5px;color:#808080;transform:scaleX(0.8378);">SCRL</div>
<div class="sunk" style="left:759px;top:555px;width:33px;height:16px"></div>
<div class="t" style="left:764.20px;top:560.17px;font-size:11.5px;color:#fff;transform:scaleX(0.9505);">ЗАМ</div>
<div class="t" style="left:763.20px;top:559.17px;font-size:11.5px;color:#808080;transform:scaleX(0.9505);">ЗАМ</div>
<div class="a" style="left:0;top:573px;width:800px;height:1px;background:#fff"></div>
<div class="btn" style="left:2px;top:576px;width:56px;height:22px"></div>
<svg class="a" style="left:5px;top:579px" width="18" height="16" viewBox="0 0 18 16"><path d="M1 2.5h3M1 4.5h3M1 6.5h3" stroke="#ff0000" stroke-dasharray="1 1"/><path d="M1 8.5h3M1 10.5h3M1 12.5h3" stroke="#0000ff" stroke-dasharray="1 1"/><path d="M5 2.5c3-2 5-2 6-0.5c2-1.5 4-1.5 5.5-0.5v12c-1.5-1-3.5-1-5.500.5c-1-1.500-3-1.500-6 0.500z" fill="#000"/><path d="M6.500 3.500c1.500-1 2.500-1 3.500-0.300v4c-1-0.700-2-0.700-3.500 0.300z" fill="#ff2000"/><path d="M11.500 3.200c1.500-1 2.500-1 3.500-0.200v4c-1-0.800-2-0.800-3.500 0.200z" fill="#00c000"/><path d="M6.500 8.800c1.500-1 2.500-1 3.500-0.300v4c-1-0.700-2-0.700-3.500 0.300z" fill="#0030ff"/><path d="M11.500 8.500c1.500-1 2.500-1 3.500-0.200v4c-1-0.800-2-0.800-3.500 0.200z" fill="#ffe000"/></svg>
<div class="t" id="start" style="left:24.50px;top:580.74px;font-size:12px;font-weight:bold;color:#000;transform:scaleX(1.0477);">Пуск</div>
<div class="a" style="left:60px;top:577px;width:1px;height:20px;background:#808080"></div><div class="a" style="left:61px;top:577px;width:1px;height:20px;background:#fff"></div>
<div class="a" style="left:64px;top:578px;width:3px;height:18px;box-sizing:border-box;border:1px solid;border-color:#fff #808080 #808080 #fff;background:#c0c0c0"></div>
<svg class="a" style="left:74px;top:579px" width="16" height="16" viewBox="0 0 16 16"><rect width="16" height="16" fill="#98984c"/><rect x="2" y="2" width="12" height="12" rx="2" fill="#d0d0c8"/><circle cx="8" cy="8" r="4.600" fill="#fff" stroke="#909050" stroke-width="1.200"/><path d="M7.500 5v3.500h3" fill="none" stroke="#707020" stroke-width="1.300"/></svg>
<svg class="a" style="left:97px;top:578px" width="17" height="18" viewBox="0 0 17 18"><rect x="1" y="5" width="14" height="8" fill="#fffff0"/><path d="M1 13.500h14.500v-8" fill="none" stroke="#000" stroke-width="1.200"/><path d="M1 5v8M1 5h14" stroke="#808080" stroke-width=".8"/><rect x="5" y="8" width="5" height="4" fill="#fff080"/><rect x="12" y="6" width="2" height="2.500" fill="#f01010"/><path d="M3 8.500l0.500-4.500l1.500 1c1.500-2.500 4-3.500 6.500-2.500l-1 2c-1.500-0.500-3 0-4 1.500l1.500 1z" fill="#1030e0"/><path d="M5.500 4.500c1.500-2 3.500-2.500 5-2" fill="none" stroke="#20d8f0" stroke-width="1"/><path d="M14.500 10l-0.500 4.500l-1.500-1c-1.500 2.500-4 3.500-6.500 2.500l1-2c1.500 0.500 3 0 4-1.500l-1.500-1z" fill="#1030e0"/><path d="M12 14c-1.500 2-3.500 2.500-5 2" fill="none" stroke="#20d8f0" stroke-width="1"/></svg>
<svg class="a" style="left:119px;top:577px" width="20" height="20" viewBox="0 0 20 20"><text x="2.200" y="16.800" font-family="'Liberation Sans',sans-serif" font-weight="bold" font-size="24" fill="#0808e8" stroke="#0808e8" stroke-width="1.1">e</text><path d="M1.500 15c-1.500-4 2.500-10 8-11.500c-4 2.500-6.500 6.500-6.500 10z" fill="#f0e000"/><path d="M2 14.500c0 1.500 1.500 3.500 3 3.500" fill="none" stroke="#0808e8" stroke-width="1.200"/><path d="M16.500 4.500c1.200 0.500 1.500-1.500 0-2" fill="none" stroke="#0808e8" stroke-width="1"/></svg>
<svg class="a" style="left:143px;top:581px" width="16" height="12" viewBox="0 0 16 12"><rect x="0.500" y="0.500" width="14.500" height="10.500" fill="#008080"/><path d="M1 0.800h14M1 0.800v10" stroke="#60ffff" stroke-dasharray="1 1" fill="none"/><path d="M0.500 11.200h15.200v-10.500" stroke="#000" stroke-width="1.200" fill="none"/><rect x="3" y="2.500" width="7" height="1.600" fill="#fff"/><path d="M3 6h10M3 8h10" stroke="#fff" stroke-dasharray="1 1" stroke-width="1.200"/></svg>
<svg class="a" style="left:166px;top:578px" width="17" height="18" viewBox="0 0 17 18"><rect x="0.500" y="3.500" width="15" height="13" fill="#c0c0c0" stroke="#000"/><path d="M1 4h3l-3 3zM15 4h-3l3 3zM1 16h3l-3-3zM15 16h-3l3-3z" fill="#1030d0"/><path d="M1 4h3M1 4v3M15 16h-3M15 16v-3" stroke="#20c0c0" stroke-width=".7"/><path d="M3 10.500l5-4.500l4 3.500l-5 4.500z" fill="#fff" stroke="#202020" stroke-width=".8"/><path d="M6.500 8.800l7-6.800l1.500 1.500l-7 6.800z" fill="#f0e000" stroke="#403000" stroke-width=".5"/><path d="M13.500 2l1-1l1.500 1.500l-1 1z" fill="#e01010"/><path d="M1.500 17h14.500v-13" stroke="#000" fill="none" stroke-width=".8"/></svg>
<svg class="a" style="left:191.500px;top:581px" width="9" height="6" viewBox="0 0 9 6"><path d="M0.700 0.500l2.300 2.300l-2.300 2.300M4.700 0.500l2.300 2.300l-2.300 2.300" fill="none" stroke="#000" stroke-width="1.400"/></svg>
<div class="a" style="left:202px;top:577px;width:1px;height:20px;background:#808080"></div><div class="a" style="left:203px;top:577px;width:1px;height:20px;background:#fff"></div>
<div class="a" style="left:206px;top:578px;width:3px;height:18px;box-sizing:border-box;border:1px solid;border-color:#fff #808080 #808080 #fff;background:#c0c0c0"></div>
<div class="btn" style="left:213px;top:576px;width:71px;height:22px"></div>
<svg class="a" style="left:217px;top:579px" width="15" height="15" viewBox="0 0 15 15"><path d="M0.500 0.500h12l2 2v12h-14z" fill="#1010d0" stroke="#000040"/><rect x="3" y="0.500" width="8" height="4" fill="#c0c0c0"/><rect x="8" y="1" width="2" height="3" fill="#1010d0"/><rect x="2" y="6" width="11" height="8" fill="#fff"/><path d="M2 7.500h11M2 10.500h11M2 13.300h11" stroke="#e01010" stroke-width="1.600"/></svg>
<div class="t" id="tb0" style="left:234.50px;top:581.32px;font-size:12.5px;color:#000;transform:scaleX(0.8724);">Windo...</div>
<div class="a" style="left:287px;top:576px;width:71px;height:22px;box-sizing:border-box;background:repeating-conic-gradient(#fff 0 25%,#c0c0c0 0 50%) 0 0/2px 2px;border:1px solid;border-color:#000 #fff #fff #000;box-shadow:inset 1px 1px 0 #808080"></div>
<svg class="a" style="left:291px;top:579px" width="16" height="16" viewBox="0 0 16 16"><rect width="16" height="16" fill="#000"/><rect x="7" y="2" width="7" height="12" fill="#c8c8c8"/><rect x="5" y="6" width="7" height="7" fill="#406040"/><rect x="9" y="3" width="3" height="2" fill="#fff"/><rect x="1.500" y="1.500" width="2" height="4" fill="#e8e8e8"/><path d="M1 14l4-4M2 15l4-4" stroke="#20a020"/><path d="M8 8h3v3h-3z" fill="#e0e0e0"/></svg>
<div class="t" id="tb1" style="left:309.50px;top:582.24px;font-size:12px;font-weight:bold;color:#000;transform:scaleX(0.9642);">Micro...</div>
<div class="btn" style="left:361px;top:576px;width:71px;height:22px"></div>
<svg class="a" style="left:366px;top:580px" width="16" height="13" viewBox="0 0 16 13"><path d="M0.500 2.500h5l1.500 1.500h6v8h-12.500z" fill="#f0e060" stroke="#605010"/><path d="M2.500 5.500h12.500l-2 6.500h-12.500z" fill="#fff8a0" stroke="#605010"/></svg>
<div class="t" id="tb2" style="left:382.50px;top:581.32px;font-size:12.5px;color:#000;transform:scaleX(0.8679);">Autorun</div>
<div class="btn" style="left:435px;top:576px;width:71px;height:22px"></div>
<svg class="a" style="left:439px;top:579px" width="17" height="16" viewBox="0 0 17 16"><circle cx="7.500" cy="7.500" r="6" fill="#d8d8d8" stroke="#202020" stroke-width="1.400"/><path d="M7 1c4 0 7 3 6 6" fill="none" stroke="#e8e000" stroke-width="2"/><path d="M3 11l11 1.500l-1 2.500l-10-1z" fill="#a0a020" stroke="#303000" stroke-width=".7"/><circle cx="7" cy="7" r="2" fill="#909090"/></svg>
<div class="t" id="tb3" style="left:457.50px;top:581.32px;font-size:12.5px;color:#000;transform:scaleX(0.8758);">Мастер...</div>
<div class="btn" style="left:509px;top:576px;width:71px;height:22px"></div>
<svg class="a" style="left:512px;top:579px" width="17" height="16" viewBox="0 0 17 16"><path d="M4.500 0.500h8l3.500 3.500v11.500h-11.500z" fill="#fff" stroke="#303030"/><path d="M12.500 0.500v3.500h3.500" fill="none" stroke="#303030"/><path d="M8 6.500h6M8 8.500h6M8 10.500h6M6 12.500h8" stroke="#a0a0a0"/><rect x="0.500" y="2.500" width="9" height="8" fill="#fff" stroke="#1020c0"/><text x="1.200" y="9.600" font-family="'Liberation Sans',sans-serif" font-weight="bold" font-size="8.500" fill="#1020c0">W</text></svg>
<div class="t" id="tb4" style="left:531.00px;top:581.32px;font-size:12.5px;color:#000;transform:scaleX(0.8731);">proekt1...</div>
<div class="sunk" style="left:664px;top:576px;width:134px;height:22px"></div>
<svg class="a" style="left:670px;top:578px" width="18" height="18" viewBox="0 0 18 18"><rect x="1.500" y="2.500" width="13" height="11" fill="#fff" stroke="#202020"/><rect x="6" y="3" width="8" height="2" fill="#2030c0"/><text x="1.200" y="7" font-size="6" font-family="'Liberation Sans',sans-serif" fill="#1020c0" font-weight="bold">30</text><path d="M2 14.500h11" stroke="#000"/><circle cx="12.500" cy="12.500" r="3.300" fill="#fff" stroke="#d01010" stroke-width="1.800"/><path d="M12.500 11v1.700h1.300" stroke="#000" stroke-width=".7" fill="none"/></svg>
<div class="a" style="left:688px;top:579px;width:16px;height:16px;background:#000080"></div>
<div class="t" id="uk" style="left:689.00px;top:581.82px;font-size:12.5px;color:#fff;transform:scaleX(0.9491);">Uk</div>
<svg class="a" style="left:705px;top:579px" width="19" height="17" viewBox="0 0 19 17"><path d="M1 1c0.500 4 1.500 7 3 8.500c2 1.500 5 1.500 8 2l4.500 1.500l-1 3l-5-1.500c-4-0.500-7-1-9-3.500c-1.500-2.500-2-6-2-10z" fill="#f0f0f0" stroke="#202020" stroke-width="1"/><path d="M10.500 11.500l5.500 1.500l-1 3l-5.500-1.500z" fill="#e8e020" stroke="#404000" stroke-width=".6"/><path d="M17 1.500v12" stroke="#000" stroke-width="1.600"/></svg>
<svg class="a" style="left:724px;top:580px" width="14" height="15" viewBox="0 0 14 15"><path d="M0.500 3.500a3.500 3.500 0 0 1 0 7z" fill="#d01010"/><circle cx="9" cy="7.300" r="4" fill="#a80808"/><path d="M7.200 5.500l3.600 3.600M10.800 5.500l-3.600 3.600" stroke="#fff" stroke-width="1.300"/></svg>
<svg class="a" style="left:739px;top:579px" width="16" height="16" viewBox="0 0 16 16"><rect x="0.500" y="0.500" width="15" height="15" fill="#101010" stroke="#a0a0a0"/><rect x="2" y="2" width="12" height="10" fill="#200000" stroke="#404040" stroke-width=".6"/><rect x="6.300" y="3.500" width="2" height="5" fill="#ff1010"/><rect x="6.300" y="9.500" width="2" height="1.500" fill="#ff1010"/><rect x="10" y="4" width="1.500" height="1.500" fill="#e01010"/><rect x="10" y="7.500" width="1.500" height="1.500" fill="#e01010"/><path d="M2 14h12" stroke="#909090" stroke-dasharray="1 1"/></svg>
<div class="t" id="clock" style="left:763.00px;top:581.82px;font-size:12.5px;color:#000;transform:scaleX(0.8951);">20:06</div>
</body></html>
